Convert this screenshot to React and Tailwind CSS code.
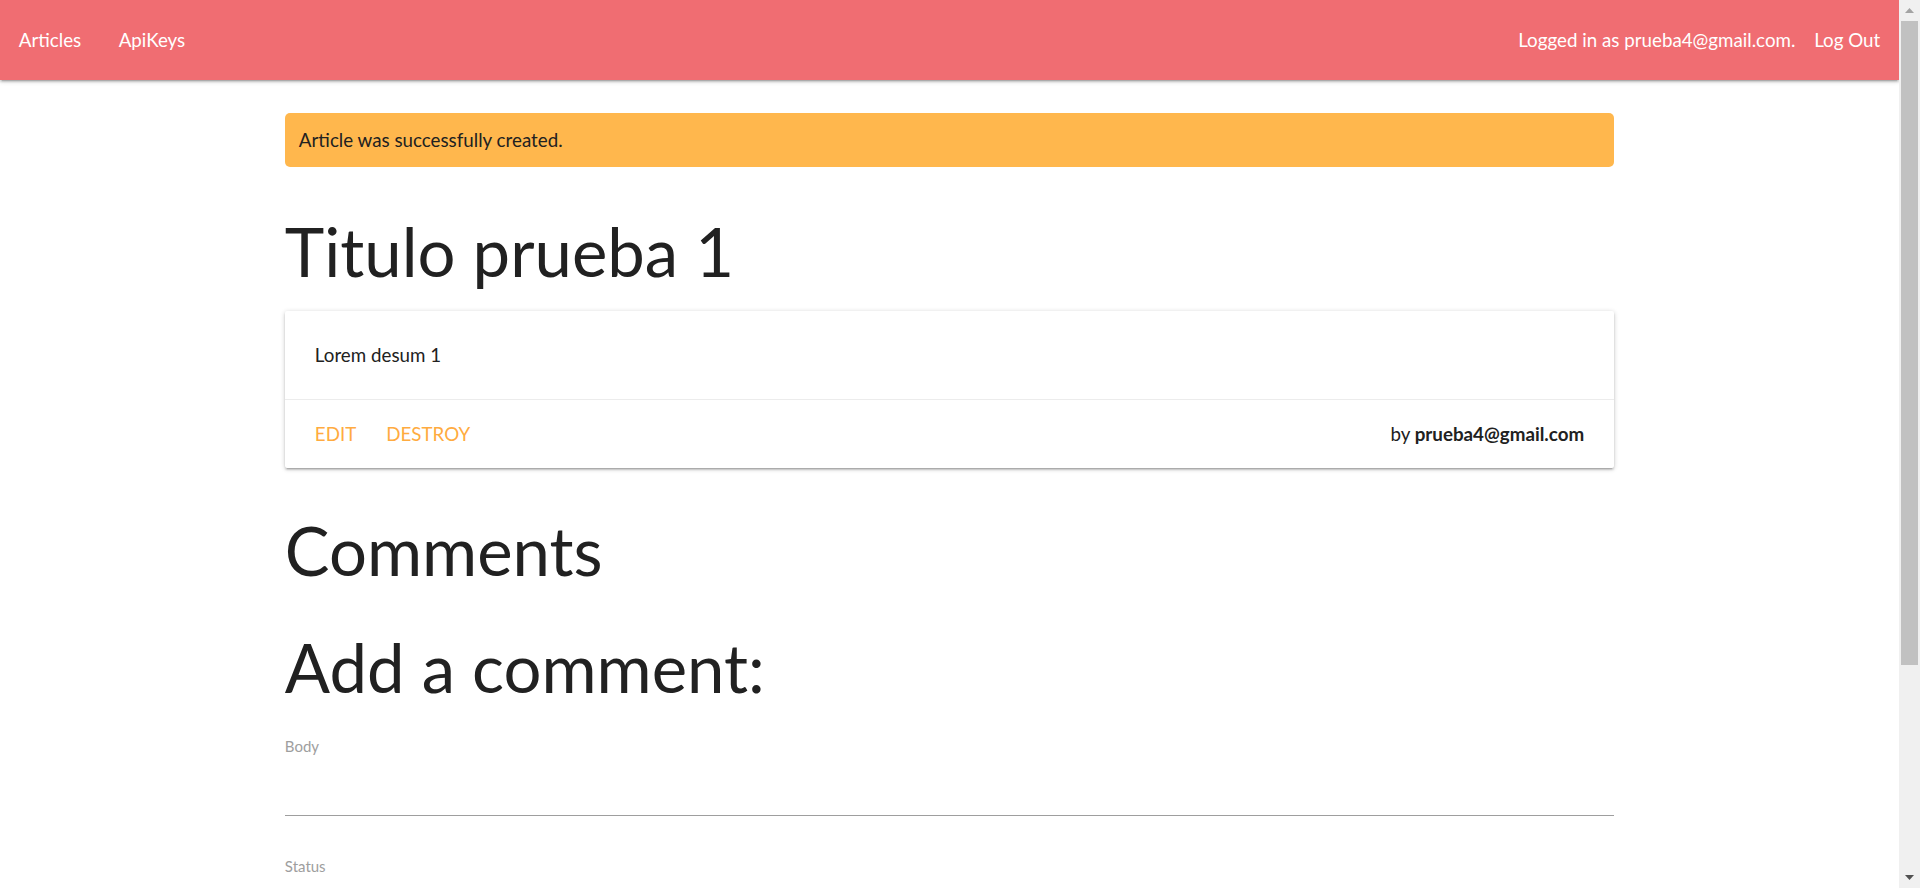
import React from 'react';

const shadow =
  'shadow-[0_2px_2px_0_rgba(0,0,0,0.14),0_3px_1px_-2px_rgba(0,0,0,0.12),0_1px_5px_0_rgba(0,0,0,0.2)]';

const NavBar = ({ email }) => (
  <nav className={`relative h-[80px] bg-[#f06d72] text-white ${shadow}`}>
    <div className="flex h-full items-center justify-between text-[18.75px]">
      <ul className="flex">
        <li><a href="#" className="px-[18.75px]">Articles</a></li>
        <li><a href="#" className="px-[18.75px]">ApiKeys</a></li>
      </ul>
      <ul className="flex">
        <li>Logged in as {email}.</li>
        <li><a href="#" className="px-[18.75px]">Log Out</a></li>
      </ul>
    </div>
  </nav>
);

// window scrollbar as it shows in the screenshot
const ScrollBar = () => (
  <div className="sticky top-0 flex h-screen w-[21px] shrink-0 flex-col self-start bg-[#f0f0f0]">
    <div className="flex h-[21px] items-center justify-center">
      <svg width="9" height="5" viewBox="0 0 9 5">
        <polygon points="0,5 4.5,0 9,5" fill="#a3a3a3" />
      </svg>
    </div>
    <div className="mx-[2px] h-[644px] bg-[#c1c1c1]" />
    <div className="mt-auto flex h-[21px] items-center justify-center">
      <svg width="9" height="5" viewBox="0 0 9 5">
        <polygon points="0,0 9,0 4.5,5" fill="#505050" />
      </svg>
    </div>
  </div>
);

const App = () => {
  const article = {
    title: 'Titulo prueba 1',
    body: 'Lorem desum 1',
    author: 'prueba4@gmail.com',
  };

  return (
    <div className="flex bg-white font-['Lato',sans-serif] text-[#212121]">
      <div className="min-h-[1176px] min-w-0 flex-1">
        <NavBar email={article.author} />

        <main className="mx-auto w-[70%]">
          <div className="mt-[33px] flex h-[54px] items-center rounded-[5px] bg-[#ffb74d] px-[14px] text-[18.75px] leading-[28px]">
            Article was successfully created.
          </div>

          <h1 className="mt-[46px] mb-[21px] text-[67px] leading-[77px] font-normal">{article.title}</h1>

          <div className={`rounded-[2px] bg-white ${shadow}`}>
            <div className="p-[30px] text-[18.75px] leading-[28px]">
              <p>{article.body}</p>
            </div>
            <div className="flex items-center justify-between border-t border-[rgba(160,160,160,0.2)] px-[30px] py-[20px] text-[18.75px] leading-[28px]">
              <div className="flex gap-[30px] uppercase text-[#ffab40]">
                <a href="#">Edit</a>
                <a href="#">Destroy</a>
              </div>
              <p>by <strong className="font-bold">{article.author}</strong></p>
            </div>
          </div>

          <h2 className="mt-[44px] text-[67px] leading-[77px]">Comments</h2>

          <h2 className="mt-[40px] text-[67px] leading-[77px]">Add a comment:</h2>

          <form className="mt-[30px] pb-[60px]">
            <div>
              <label className="block text-[15px] leading-[20px] text-[#9e9e9e]">Body</label>
              <input
                type="text"
                className="mt-[16px] block h-[44px] w-full border-b border-[#9e9e9e] bg-transparent text-[18.75px] outline-none"
              />
            </div>
            <div className="mt-[40px]">
              <label className="block text-[15px] leading-[20px] text-[#9e9e9e]">Status</label>
              <select className="mt-[10px] block h-[44px] w-full border-b border-[#9e9e9e] bg-transparent text-[18.75px] outline-none">
                <option>public</option>
                <option>private</option>
                <option>archived</option>
              </select>
            </div>
            <button
              type="submit"
              className="mt-[30px] h-[45px] rounded-[2px] bg-[#26a69a] px-[20px] text-[18px] uppercase text-white"
            >
              Create Comment
            </button>
          </form>
        </main>
      </div>

      <ScrollBar />
    </div>
  );
};

export default App;
